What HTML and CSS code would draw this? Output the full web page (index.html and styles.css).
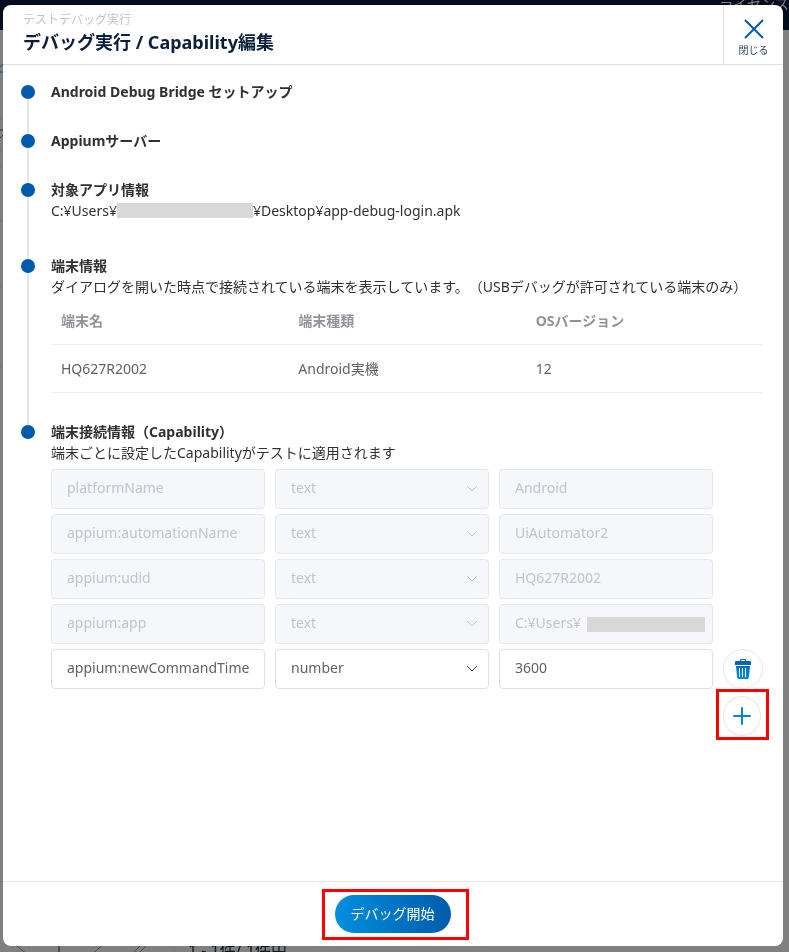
FILE: index.html
```html
<!DOCTYPE html>
<html lang="ja">
  <head>
    <meta charset="UTF-8" />
    <meta name="viewport" content="width=device-width, initial-scale=1.0" />
    <title>デバッグ実行 / Capability編集</title>
    <link rel="stylesheet" href="styles.css">
  </head>

  <body>
    <div class="backdrop" aria-hidden="true">
      <div class="app-header"><span>ライセンス</span></div>
      <div class="app-content">
        <svg width="8" height="350" viewBox="0 0 8 350">
          <path d="M0 37l3-3M0 42h3" stroke="#0a4a78" fill="none" />
          <path d="M0 100h3M0 108l3-3" stroke="#333" fill="none" />
          <path d="M0 89h3M0 120h3M0 136h3M0 191h3M0 256h3M0 336h3" stroke="#747679" />
        </svg>
      </div>
      <div class="app-pager">
        <svg class="pager-icons" width="176" height="14" viewBox="0 0 176 14">
          <path d="M13 3l14 11M105 3L92 14M143 3l-11 11M149 3l-11 11" stroke="#4c4c4c" fill="none" />
          <path d="M59 3v11" stroke="#2b0c1c" />
          <path d="M174 3v11" stroke="#707070" />
        </svg>
        <span class="pager-text">1 - 1件/ 1件中</span>
      </div>
    </div>

    <div class="dialog" role="dialog" aria-labelledby="dialog-title">
      <header class="dialog-header">
        <div class="heading">
          <p class="subtitle">テストデバッグ実行</p>
          <h1 class="title" id="dialog-title">デバッグ実行 / Capability編集</h1>
        </div>
        <button class="close-btn" type="button">
          <svg width="20" height="20" viewBox="0 0 20 20">
            <path d="M1 1l18 18M19 1L1 19" stroke="#005bac" stroke-width="2" />
          </svg>
          <span>閉じる</span>
        </button>
      </header>

      <main class="dialog-body">
        <ol class="timeline">
          <li class="step">
            <h2>Android Debug Bridge セットアップ</h2>
          </li>
          <li class="step">
            <h2>Appiumサーバー</h2>
          </li>
          <li class="step step-detail">
            <h2>対象アプリ情報</h2>
            <p class="path">C:¥Users¥<span class="mask"></span>¥Desktop¥app-debug-login.apk</p>
          </li>
          <li class="step">
            <h2>端末情報</h2>
            <p>ダイアログを開いた時点で接続されている端末を表示しています。（USBデバッグが許可されている端末のみ）</p>
            <table class="devices">
              <thead>
                <tr>
                  <th>端末名</th>
                  <th>端末種類</th>
                  <th>OSバージョン</th>
                </tr>
              </thead>
              <tbody>
                <tr>
                  <td>HQ627R2002</td>
                  <td>Android実機</td>
                  <td>12</td>
                </tr>
              </tbody>
            </table>
          </li>
          <li class="step">
            <h2>端末接続情報（Capability）</h2>
            <p>端末ごとに設定したCapabilityがテストに適用されます</p>
            <div class="capabilities">
              <div class="row">
                <input class="field" type="text" value="platformName" aria-label="名前" disabled>
                <div class="select">
                  <select class="field" aria-label="型" disabled><option>text</option></select>
                  <svg class="arrow" width="12" height="8" viewBox="0 0 12 8"><path d="M1 1l5 5 5-5" /></svg>
                </div>
                <input class="field" type="text" value="Android" aria-label="値" disabled>
              </div>
              <div class="row">
                <input class="field" type="text" value="appium:automationName" aria-label="名前" disabled>
                <div class="select">
                  <select class="field" aria-label="型" disabled><option>text</option></select>
                  <svg class="arrow" width="12" height="8" viewBox="0 0 12 8"><path d="M1 1l5 5 5-5" /></svg>
                </div>
                <input class="field" type="text" value="UiAutomator2" aria-label="値" disabled>
              </div>
              <div class="row">
                <input class="field" type="text" value="appium:udid" aria-label="名前" disabled>
                <div class="select">
                  <select class="field" aria-label="型" disabled><option>text</option></select>
                  <svg class="arrow" width="12" height="8" viewBox="0 0 12 8"><path d="M1 1l5 5 5-5" /></svg>
                </div>
                <input class="field" type="text" value="HQ627R2002" aria-label="値" disabled>
              </div>
              <div class="row">
                <input class="field" type="text" value="appium:app" aria-label="名前" disabled>
                <div class="select">
                  <select class="field" aria-label="型" disabled><option>text</option></select>
                  <svg class="arrow" width="12" height="8" viewBox="0 0 12 8"><path d="M1 1l5 5 5-5" /></svg>
                </div>
                <div class="masked-field">
                  <input class="field" type="text" value="C:¥Users¥" aria-label="値" disabled>
                  <span class="mask"></span>
                </div>
              </div>
              <div class="row">
                <input class="field" type="text" value="appium:newCommandTimeout" aria-label="名前">
                <div class="select">
                  <select class="field" aria-label="型"><option>number</option><option>text</option></select>
                  <svg class="arrow" width="12" height="8" viewBox="0 0 12 8"><path d="M1 1l5 5 5-5" /></svg>
                </div>
                <input class="field" type="text" value="3600" aria-label="値">
                <button class="round-btn" type="button" aria-label="削除">
                  <svg width="18" height="22" viewBox="0 0 18 22">
                    <defs>
                      <linearGradient id="trash" x1="0" y1="0" x2="0" y2="1">
                        <stop offset="0" stop-color="#005bac" />
                        <stop offset="1" stop-color="#0090df" />
                      </linearGradient>
                    </defs>
                    <path fill="url(#trash)" fill-rule="evenodd" d="M6 3V2q0-1 1-1h4q1 0 1 1v1h4q1 0 1 1v3H1V4q0-1 1-1zM7 2v1h4V2zM2 8h14l-1 11q0 2-2 2H5q-2 0-2-2zM5 10v9h1v-9zM8 10v9h1v-9zM11 10v9h1v-9z" />
                  </svg>
                </button>
              </div>
              <div class="add-row">
                <div class="add-mark">
                  <button class="round-btn add-btn" type="button" aria-label="追加">
                    <svg width="18" height="18" viewBox="0 0 18 18">
                      <path d="M9 1v16M1 9h16" stroke="#0a84d0" stroke-width="2" stroke-linecap="round" />
                    </svg>
                  </button>
                </div>
              </div>
            </div>
          </li>
        </ol>
      </main>

      <footer class="dialog-footer">
        <div class="start-mark">
          <button class="start-btn" type="button">デバッグ開始</button>
        </div>
      </footer>
    </div>
  </body>
</html>
```
FILE: styles.css
```css
* {
  box-sizing: border-box;
}

body {
  display: flex;
  min-height: 100vh;
  margin: 0;
  padding: 5px 6px 6px 3px;
  background-color: #808080;
  color: #303133;
  font-family: "Noto Sans", "Noto Sans CJK JP", sans-serif;
  font-size: 14px;
  line-height: 21px;
  text-spacing-trim: space-all;
}

h1,
h2,
p,
ol {
  margin: 0;
  padding: 0;
}

button,
input,
select {
  font: inherit;
}

/* page behind the dialog */
.backdrop {
  position: fixed;
  inset: 0;
  display: flex;
  flex-direction: column;
  overflow: hidden;
}

.app-header {
  display: flex;
  flex: none;
  justify-content: flex-end;
  height: 30px;
  background-color: #020d1c;
  color: #808080;
  line-height: 8px;
}

.app-content {
  flex: 1;
}

.app-pager {
  display: flex;
  height: 12px;
  color: #10161e;
  font-size: 16px;
}

.pager-icons {
  flex: none;
}

.pager-text {
  padding-left: 12px;
}

.dialog {
  position: relative;
  display: flex;
  flex: 1;
  flex-direction: column;
  min-width: 0;
  border-radius: 8px;
  background-color: #fff;
  overflow: hidden;
}

.dialog-header {
  display: flex;
  justify-content: space-between;
  height: 60px;
  border-bottom: 1px solid #dcdfe9;
}

.heading {
  padding: 5px 0 0 20px;
}

.subtitle {
  color: #c0c4cc;
  font-size: 12px;
  line-height: 20px;
}

.title {
  color: #0b1f3c;
  font-size: 18px;
  line-height: 24px;
}

.close-btn {
  display: flex;
  flex-direction: column;
  align-items: center;
  width: 60px;
  padding: 14px 0 0;
  border: 0;
  border-left: 1px solid #dcdfe6;
  background: none;
  color: #303f58;
  font-size: 10px;
  line-height: 22px;
}

.dialog-body {
  flex: 1;
  padding: 16px 20px 20px 18px;
}

.timeline {
  list-style: none;
}

.step {
  position: relative;
  padding: 0 0 28px 30px;
}

.step-detail {
  padding-bottom: 34px;
}

.step::before {
  content: "";
  position: absolute;
  top: 11px;
  left: 6px;
  width: 2px;
  height: 100%;
  background-color: #e4e7ed;
}

.step:last-child::before {
  display: none;
}

.step::after {
  content: "";
  position: absolute;
  top: 4px;
  left: 0;
  width: 14px;
  height: 14px;
  border-radius: 50%;
  background-color: #005bac;
}

.step h2 {
  font-size: 14px;
  line-height: 21px;
}

.path {
  display: flex;
  align-items: center;
}

.mask {
  width: 136px;
  height: 15px;
  background-color: #d8d8d8;
}

.devices {
  width: 100%;
  border-spacing: 0;
  table-layout: fixed;
  color: #606266;
  text-align: left;
}

.devices th,
.devices td {
  height: 48px;
  padding: 0 10px;
  border-bottom: 1px solid #ebeef5;
}

.devices th {
  color: #909399;
}

.capabilities {
  display: flex;
  flex-direction: column;
  gap: 5px;
  padding-top: 6px;
}

.row {
  display: grid;
  grid-template-columns: 1fr 1fr 1fr 40px;
  gap: 10px;
}

.field {
  width: 100%;
  height: 40px;
  padding: 0 15px 3px;
  border: 1px solid #dcdfe6;
  border-radius: 4px;
  background-color: #fff;
  color: #606266;
  appearance: none;
}

.field:disabled {
  border-color: #e4e7ed;
  background-color: #f5f7fa;
  color: #c0c4cc;
  opacity: 1;
}

.select,
.masked-field {
  position: relative;
}

.arrow {
  position: absolute;
  top: 16px;
  right: 11px;
  fill: none;
  stroke: #404246;
  pointer-events: none;
}

.field:disabled + .arrow {
  stroke: #c0c4cc;
}

.masked-field .mask {
  position: absolute;
  top: 13px;
  right: 8px;
  width: 118px;
}

.round-btn {
  display: flex;
  align-items: center;
  justify-content: center;
  width: 40px;
  height: 40px;
  padding: 0;
  border: 1px solid #e4e7ed;
  border-radius: 50%;
  background-color: #fff;
}

.add-row {
  display: flex;
  justify-content: flex-end;
  margin: -5px -6px 0 0;
}

.add-mark {
  padding: 4px 5px 1px 4px;
  border: 3px solid #f00;
}

.add-btn {
  width: 38px;
}

.dialog-footer {
  display: flex;
  justify-content: center;
  padding: 7px 0 6px 4px;
  border-top: 1px solid #e6e6e6;
}

.start-mark {
  padding: 3px 15px 4px 10px;
  border: 3px solid #f00;
}

.start-btn {
  height: 38px;
  padding: 0 16px 2px;
  border: 0;
  border-radius: 20px;
  background: linear-gradient(to right, #0090df, #005bac);
  color: #fff;
}
```
